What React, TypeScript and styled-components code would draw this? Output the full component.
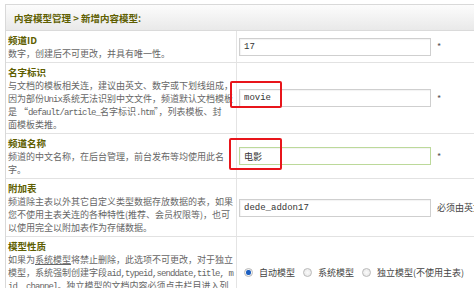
import styled, { createGlobalStyle } from 'styled-components';
import { ReactNode } from 'react';

const GlobalStyle = createGlobalStyle`
  html, body {
    margin: 0;
    padding: 0;
    background: #fff;
    overflow: hidden;
  }

  body {
    font-family: "Noto Sans CJK SC", "Liberation Sans", sans-serif;
  }
`;

interface FieldRow {
  label: ReactNode;
  desc: ReactNode[];
  field: ReactNode;
}

function buildRows(): FieldRow[] {
  return [
    {
      label: '频道ID',
      desc: ['数字，创建后不可更改，并具有唯一性。'],
      field: (
        <>
          <TextInput readOnly value="17" />
          <Star>*</Star>
        </>
      ),
    },
    {
      label: '名字标识',
      desc: [
        '与文档的模板相关连，建议由英文、数字或下划线组成，',
        <>
          因为部份<Mono>Unix</Mono>系统无法识别中文文件，频道默认文档模板
        </>,
        <>
          是 “<Mono>default/article_</Mono>名字标识<Mono>.htm</Mono>”，列表模板、封
        </>,
        '面模板类推。',
      ],
      field: (
        <>
          <TextInput readOnly value="movie" />
          <Star>*</Star>
        </>
      ),
    },
    {
      label: '频道名称',
      desc: ['频道的中文名称，在后台管理，前台发布等均使用此名', '字。'],
      field: (
        <>
          <TextInput readOnly value="电影" $tone="green" />
          <Star>*</Star>
        </>
      ),
    },
    {
      label: '附加表',
      desc: [
        '频道除主表以外其它自定义类型数据存放数据的表，如果',
        '您不使用主表关连的各种特性(推荐、会员权限等)，也可',
        '以使用完全以附加表作为存储数据。',
      ],
      field: (
        <>
          <TextInput readOnly value="dede_addon17" />
          <Note>必须由英文、数字、下划线组成</Note>
        </>
      ),
    },
    {
      label: '模型性质',
      desc: [
        <>
          如果为<Link>系统模型</Link>将禁止删除，此选项不可更改，对于独立
        </>,
        <>
          模型，系统强制创建字段<Mono>aid,typeid,senddate,title, m</Mono>
        </>,
        <>
          <Mono>id, channel</Mono>。独立模型的文档内容必须点击栏目进入列
        </>,
        '表管理。',
      ],
      field: (
        <RadioGroup>
          <RadioItem>
            <Radio $checked />
            自动模型
          </RadioItem>
          <RadioItem>
            <Radio />
            系统模型
          </RadioItem>
          <RadioItem>
            <Radio />
            独立模型(不使用主表)
          </RadioItem>
        </RadioGroup>
      ),
    },
  ];
}

export default function App() {
  const rows = buildRows();

  return (
    <Page>
      <GlobalStyle />
      <Frame>
        <Header>内容模型管理 &gt; 新增内容模型:</Header>
        {rows.map((row, i) => (
          <Row key={i}>
            <LabelCell>
              <Label>{row.label}</Label>
              {row.desc.map((line, j) => (
                <Desc key={j}>{line}</Desc>
              ))}
            </LabelCell>
            <FieldCell>{row.field}</FieldCell>
          </Row>
        ))}
      </Frame>

      <Mark $left={230} $top={81} $width={52} $height={27} />
      <Mark $left={229} $top={138} $width={53} $height={32} />
    </Page>
  );
}

const Page = styled.div`
  position: relative;
  box-sizing: border-box;

  width: 474px;
  height: 288px;

  padding: 4px 0 0 5px;
  overflow: hidden;
`;

const Frame = styled.div`
  width: 600px;

  border: 1px solid #d9d9d9;
  background: #fff;
`;

const Header = styled.div`
  display: flex;
  align-items: center;

  height: 25px;
  padding-left: 8px;

  background: linear-gradient(#fcfcfc, #e9e9e9);
  border-bottom: 1px solid #dadada;

  font-size: 9.5px;
  font-weight: 700;
  color: #5e5e00;
`;

const Row = styled.div`
  display: grid;
  grid-template-columns: 231px 1fr;

  border-bottom: 1px solid #e2e2e2;
`;

const LabelCell = styled.div`
  box-sizing: border-box;

  padding: 3px 2px 2px 2px;
  border-right: 1px solid #e4e4e4;
  overflow: hidden;
`;

const Label = styled.div`
  height: 13px;

  font-size: 9.5px;
  font-weight: 700;
  line-height: 13px;
  color: #5e5e00;
`;

const Desc = styled.div`
  height: 13px;

  font-size: 9px;
  line-height: 13px;
  color: #666;
  white-space: nowrap;
`;

const Mono = styled.span`
  font-family: "Liberation Mono", monospace;
  line-height: 1;
  letter-spacing: -0.9px;
`;

const Link = styled.span`
  text-decoration: underline;
`;

const FieldCell = styled.div`
  display: flex;
  align-items: center;
  gap: 6px;

  padding-left: 2px;
`;

const TextInput = styled.input<{ $tone?: 'green' }>`
  box-sizing: border-box;

  width: 192px;
  height: 18px;

  padding: 0 4px;
  border: 1px solid ${({ $tone }) => ($tone === 'green' ? '#bcd99a' : '#cfcfcf')};
  box-shadow: inset 1px 1px 1px rgba(0, 0, 0, 0.05);
  outline: none;
  background: #fff;

  font-family: "Liberation Mono", "Noto Sans CJK SC", monospace;
  font-size: 9px;
  color: #333;
`;

const Star = styled.span`
  font-size: 9px;
  color: #555;
`;

const Note = styled.span`
  font-size: 9px;
  color: #444;
  white-space: nowrap;
`;

const RadioGroup = styled.div`
  display: flex;
  align-items: center;

  margin-left: 5px;

  font-size: 9px;
  color: #444;
  white-space: nowrap;
`;

const RadioItem = styled.label`
  display: inline-flex;
  align-items: center;
  gap: 6px;

  margin-right: 8px;
`;

const Radio = styled.span<{ $checked?: boolean }>`
  box-sizing: border-box;

  width: 9px;
  height: 9px;

  border: 1px solid #b9b9b9;
  border-radius: 50%;
  background: ${({ $checked }) =>
    $checked
      ? 'radial-gradient(circle, #1d5fc0 0 2px, #6b98d8 2.6px, #f4f4f4 3px)'
      : 'radial-gradient(circle, #fafafa 0, #e4e4e4 100%)'};
`;

const Mark = styled.div<{ $left: number; $top: number; $width: number; $height: number }>`
  position: absolute;
  left: ${({ $left }) => $left}px;
  top: ${({ $top }) => $top}px;

  box-sizing: border-box;
  width: ${({ $width }) => $width}px;
  height: ${({ $height }) => $height}px;

  border: 2px solid #e8151b;
  border-radius: 2px;
`;
